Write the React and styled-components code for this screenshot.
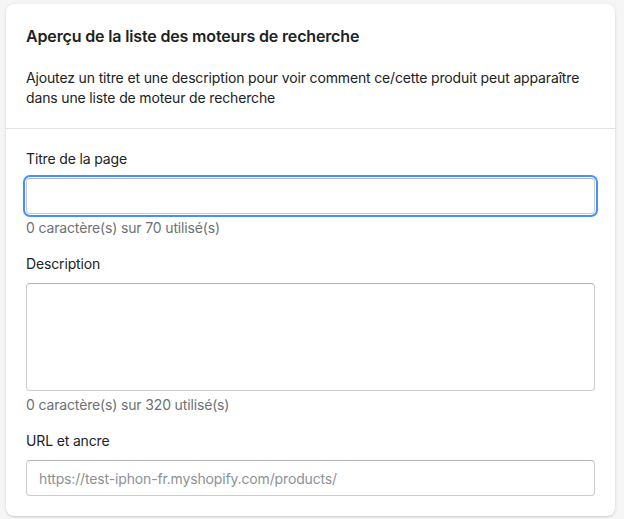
import React from 'react'
import styled, { createGlobalStyle } from 'styled-components'

const GlobalStyle = createGlobalStyle`
    html, body {
        margin: 0;
        padding: 0;
        background: #f6f6f7;
    }
    body {
        font-family: Inter, "Noto Sans", "Liberation Sans", sans-serif;
        color: #202223;
        letter-spacing: -0.15px;
        -webkit-font-smoothing: antialiased;
    }
`

const Page = styled.div`
    padding: 4px 9px 3px 6px;
`

const Card = styled.div`
    background: #ffffff;
    border-radius: 8px;
    box-shadow: 0 0 5px rgba(23, 24, 24, 0.05), 0 1px 2px rgba(0, 0, 0, 0.15);
    overflow: hidden;
`

const Header = styled.div`
    padding: 20px 20px 0;
`

const Title = styled.h2`
    margin: 0;
    font-size: 16px;
    line-height: 24px;
    font-weight: 600;
`

const Section = styled.div`
    padding: 20px;
    border-top: ${props => (props.$divided ? '1px solid #e1e3e5' : 'none')};
`

const Text = styled.p`
    margin: 0;
    font-size: 14px;
    line-height: 20px;
`

const Field = styled.div`
    display: flex;
    flex-direction: column;
    & + & {
        margin-top: 16px;
    }
`

const Label = styled.label`
    font-size: 14px;
    line-height: 20px;
    margin-bottom: 9px;
`

const InputText = styled.input`
    box-sizing: border-box;
    width: 100%;
    height: 36px;
    margin: 0;
    padding: 0 12px;
    font-family: inherit;
    font-size: 14px;
    letter-spacing: inherit;
    color: #202223;
    background: #ffffff;
    border: 1px solid #c9cccf;
    border-top-color: #aeb4b9;
    border-radius: 4px;
    outline: ${props => (props.$focused ? '2px solid #458fff' : 'none')};
    outline-offset: 1px;

    &::placeholder {
        color: #8c9196;
    }
`

const TextArea = styled.textarea`
    box-sizing: border-box;
    display: block;
    width: 100%;
    height: 108px;
    margin: 0;
    padding: 8px 12px;
    font-family: inherit;
    font-size: 14px;
    resize: none;
    background: #ffffff;
    border: 1px solid #c9cccf;
    border-top-color: #aeb4b9;
    border-radius: 4px;
    outline: none;
`

const HelpText = styled.div`
    margin-top: 4px;
    font-size: 14px;
    line-height: 20px;
    color: #6d7175;
`

function App() {
    return (
        <Page>
            <GlobalStyle />
            <Card>
                <Header>
                    <Title>Aperçu de la liste des moteurs de recherche</Title>
                </Header>
                <Section>
                    <Text>
                        Ajoutez un titre et une description pour voir comment ce/cette produit peut apparaître
                        dans une liste de moteur de recherche
                    </Text>
                </Section>
                <Section $divided>
                    <Field>
                        <Label htmlFor="seo-title">Titre de la page</Label>
                        <InputText id="seo-title" type="text" $focused />
                        <HelpText>0 caractère(s) sur 70 utilisé(s)</HelpText>
                    </Field>
                    <Field>
                        <Label htmlFor="seo-description">Description</Label>
                        <TextArea id="seo-description" />
                        <HelpText>0 caractère(s) sur 320 utilisé(s)</HelpText>
                    </Field>
                    <Field>
                        <Label htmlFor="seo-url">URL et ancre</Label>
                        <InputText
                            id="seo-url"
                            type="text"
                            placeholder="https://test-iphon-fr.myshopify.com/products/"
                        />
                    </Field>
                </Section>
            </Card>
        </Page>
    )
}

export default App
